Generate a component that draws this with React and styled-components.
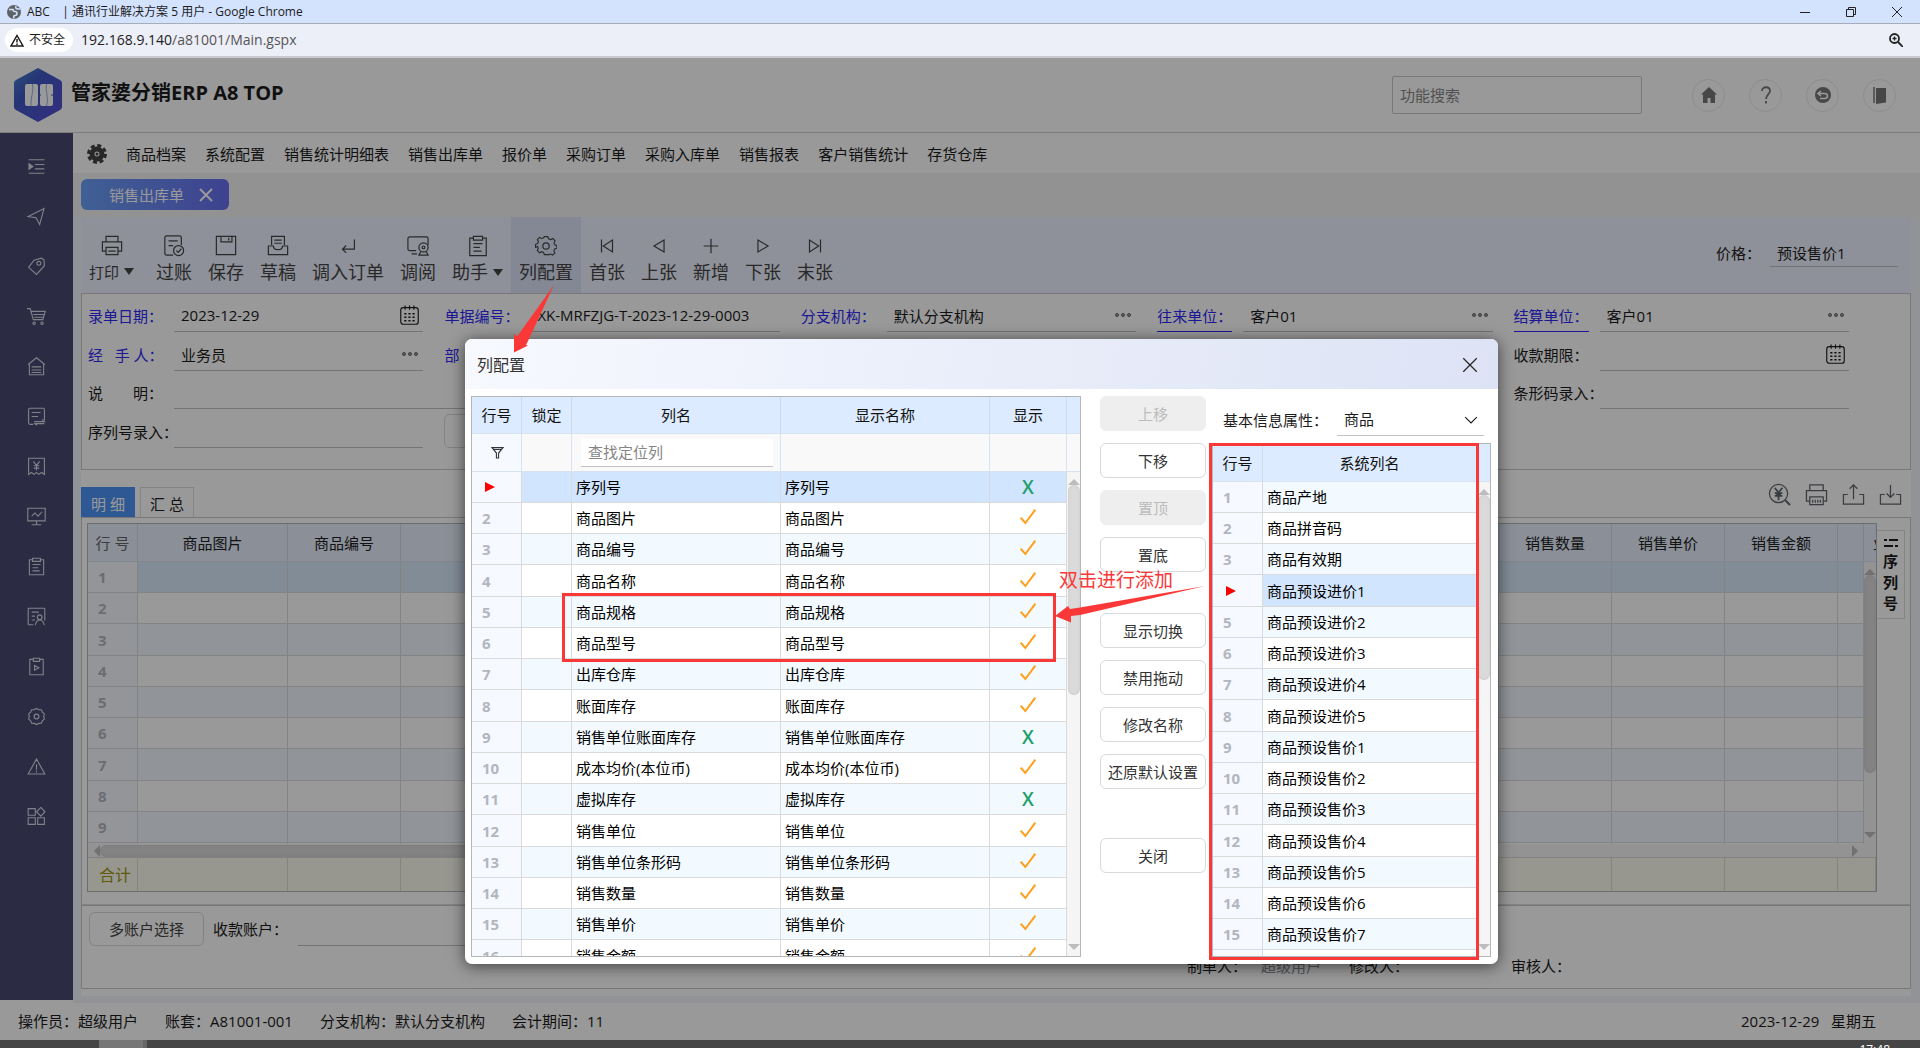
import React from "react";
import styled, { createGlobalStyle, css } from "styled-components";

const GlobalStyle = createGlobalStyle`
  *, *::before, *::after { box-sizing: border-box; }
  body {
    margin: 0;
    overflow: hidden;
    font: 15px/20px "Open Sans", "Noto Sans CJK SC", sans-serif;
    color: #1c1c1c;
    background: #fff;
  }
  button, input, select { font: inherit; color: inherit; }
  button { cursor: pointer; }
`;

/* ---------- icons ---------- */

const Svg = styled.svg`
  display: block;
  flex: none;
  width: ${(p) => p.$w}px;
  height: ${(p) => p.$h || p.$w}px;
  fill: none;
  stroke: currentColor;
  stroke-width: ${(p) => p.$stroke || 1.3};
`;

const shapes = {
  printer: <path d="M5.5 7.5V1.5h13v6M5.5 17.5h-4v-10h21v10h-4M5.5 13.5h13v8h-13zM8 17.5h8" />,
  post: <><path d="M11 22H4a2 2 0 0 1-2-2V3a2 2 0 0 1 2-2h14a2 2 0 0 1 2 2v8M6 6.500h10M6 11.500h5" /><circle cx="17" cy="17" r="5.500" /><path d="M14.500 17l2 2 3.500-4" /></>,
  save: <path d="M1.500 1.500h21v20h-21zM6.500 1.500v6h12v-6M15 3v3" />,
  draft: <path d="M5 11V1.500h14V11M1.500 21.500V12H7c0 2.500 2 4 5 4s5-1.500 5-4h5.500v9.500zM8 5.500h8M8 9h8" />,
  enter: <path d="M19 5v10.500H6M10 11.500l-4 4 4 4" />,
  review: <><path d="M10 17H3a2 2 0 0 1-2-2V4a2 2 0 0 1 2-2h18a2 2 0 0 1 2 2v7M5 20.500h6" /><circle cx="18" cy="13.500" r="5" /><circle cx="18" cy="13.500" r="1.500" /><path d="M15 18l-2 4h3M21 18l2 4h-3M15 22h6" /></>,
  clip: <path d="M7 3.500H3v19h18v-19h-4M7 1.500h10v4H7zM7 9.500h10M7 13.500h7M7 17.500h9" />,
  gear: <><path d="M10 1.500h4l.800 2.500 2.600 1 2.500-1.200 2.500 2.700-1.200 2.400.900 2.100 2.400 1v3l-2.500.900-.900 2.200 1.100 2.400-2.600 2.500-2.400-1.200-2.300.900L14 22.500h-4l-.900-2.500-2.300-1-2.500 1.300-2.500-2.700 1.200-2.400-.9-2.200L-.3 14v-3.500l2.500-1 .9-2.100L1.900 5l2.500-2.500 2.400 1.200L9.200 3z" transform="translate(.8 .3) scale(.94)" /><circle cx="12" cy="12" r="3.500" /></>,
  first: <path d="M6 5v14M18 5.500v13L8 12z" />,
  prev: <path d="M17.500 5.500v13L6.500 12z" />,
  plus: <path d="M12 4v16M4 12h16" />,
  next: <path d="M6.500 5.500v13l11-6.500z" />,
  last: <path d="M18 5v14M6 5.500v13L16 12z" />,
  calendar: <><rect x="2" y="3" width="20" height="19" rx="3" /><path d="M7 .500v5M12 .500v5M17 .500v5" /><path d="M6 10h12M6 14h12M6 18h12" strokeDasharray="2.500 2.200" strokeWidth="1.800" /></>,
  indent: <><path d="M2 3.500h20M10 9.500h12M10 15h12M2 20.500h20" /><path d="M2.500 8.500l5 3.500-5 3.500z" fill="currentColor" /></>,
  plane: <path d="M1.500 12L21.500 2 16 22l-4.500-8.500z" />,
  tag: <><path d="M2 13L9 4l9-2.500 3.500 2L22 11 12 22z" /><circle cx="15" cy="8" r="2.500" /></>,
  cart: <><path d="M0 2h4l4 14h12l3-10.500H5M8 9.500h13.500M9 13h11.500" /><circle cx="9" cy="20.500" r="1.500" /><circle cx="19" cy="20.500" r="1.500" /></>,
  store: <path d="M1.500 9.500L12 1l10.500 8.500M3 8.500v14h18v-14M6 12.500h12M6 16.500h12M6 19.500h12" />,
  returns: <path d="M8 22H4a2 2 0 0 1-2-2V3a1.500 1.500 0 0 1 1.500-1.500h17A1.500 1.500 0 0 1 22 3v14M6 7h11M6 12h8M9 18.500h13l-3-3M22 21h-12l2.500 2" />,
  bill: <path d="M2 22V1.500h20V22l-3.500-2.500L15 22l-3-2.500L9 22l-3.500-2.500zM8 5.500l4 5 4-5M12 10.500V17M8.500 11h7M8.500 14h7" />,
  chart: <path d="M1 1.500h22v16H1zM12 17.500v5M6 22.500h12M6 11.500l4-4 4 4 5-5.500" />,
  person: <><path d="M8 22.500H2.500a1 1 0 0 1-1-1v-19a1 1 0 0 1 1-1h19a1 1 0 0 1 1 1V17M6 6.500h9M6 11.500h4M6 16.500h4" /><circle cx="16" cy="13" r="3" /><path d="M10.500 23c1-5 3-6.500 5.500-6.500s5 2 6 6.500" /></>,
  clipPlay: <path d="M8 3H3.500v19.500h17V3H16M8 1.500h8v4H8zM9.500 10.500v6l5.500-3z" />,
  flower: <><path d="M12 1.800l2.800 1.500 3.300.200 1.300 2.900 2.500 2.300-.800 3.300.800 3.300-2.500 2.300-1.300 2.900-3.300.200L12 22.200l-2.800-1.500-3.300-.200-1.300-2.900-2.500-2.300.8-3.300-.8-3.300 2.500-2.300 1.300-2.900 3.300-.2z" /><circle cx="12" cy="12" r="3" /></>,
  warn: <path d="M12 2.500l10.500 19h-21zM12 9v7M12 17.500v2" />,
  apps: <path d="M1.500 2h9v8.500h-9zM1.500 13.500h9V22h-9zM13.500 13.500H22V22h-8.500zM17.500.500l5.300 5.500-5.300 5.500L12 6z" />,
  yenSearch: <><circle cx="11" cy="11" r="9.500" /><path d="M18 18l5 5" strokeWidth="2" /><path d="M7 5l4 5 4-5M11 10v8M7 10.500h8M7 13.500h8M8.500 12h5" strokeWidth="1.800" /></>,
  printer2: <path d="M5 8V2h14v6M5 19H1.500V8h21v11H19M5 14.500h14v8H5zM8 17.500v3M10.700 17.500v3M13.400 17.500v3M16 17.500v3" />,
  upload: <path d="M6 12H1.500v10h21V12H18M12 17V2M8 6l4-4 4 4" />,
  download: <path d="M6 12H1.500v10h21V12H18M12 2v13M8 11l4 4 4-4" />,
  funnel: <path d="M2 3h20l-8 10v9h-4v-9zM5 6.500h14" />,
  close: <path d="M3 3l18 18M21 3L3 21" />,
  chevron: <path d="M2 7l10 10L22 7" />,
  check: <path d="M1 13l7 8L23 1" />,
};

const Icon = ({ name, size = 22, stroke }) => (
  <Svg viewBox="0 0 24 24" $w={size} $stroke={stroke} aria-hidden="true">{shapes[name]}</Svg>
);

const MarkerSvg = styled(Svg)`
  margin-left: 3px;
`;
const Marker = () => (
  <MarkerSvg viewBox="0 0 10 10" $w={10} aria-hidden="true">
    <path d="M0 0l10 5-10 5z" fill="#f00" stroke="none" />
  </MarkerSvg>
);

/* ---------- browser frame ---------- */

const Shell = styled.div`
  display: flex;
  flex-direction: column;
  height: 100vh;
`;
const TitleBar = styled.div`
  display: flex;
  align-items: center;
  flex: none;
  height: 24px;
  padding: 0 11px 0 7px;
  gap: 6px;
  background: #d3e2fd;
  border-bottom: 1px solid #a8acb6;
  font-size: 12px;
  white-space: pre;
`;
const WindowButtons = styled.div`
  display: flex;
  gap: 22px;
  margin-left: auto;
`;
const FrameButton = styled.button`
  display: grid;
  place-items: center;
  width: 24px;
  height: 22px;
  padding: 0;
  border: 0;
  background: none;
  color: #222;
`;
const AddressBar = styled.div`
  display: flex;
  align-items: center;
  flex: none;
  height: 34px;
  padding: 0 12px 0 5px;
  gap: 8px;
  background: #eceef8;
  border-bottom: 2px solid #c9cad0;
`;
const Pill = styled.span`
  display: flex;
  align-items: center;
  gap: 5px;
  height: 24px;
  padding: 0 8px 0 5px;
  border-radius: 12px;
  background: #fff;
  font-size: 12px;
`;
const Url = styled.span`
  flex: 1;
  font-size: 14px;
  color: #555;
  b { font-weight: 400; color: #222; }
`;
const Taskbar = styled.footer`
  display: flex;
  justify-content: space-between;
  flex: none;
  height: 8px;
  padding: 0 30px 0 99px;
  overflow: hidden;
  background: #454545;
  color: #fff;
  font-size: 12px;
  line-height: 20px;
`;
const TaskItem = styled.span`
  width: 48px;
  background: #777;
  border-right: 4px solid #666;
`;

/* ---------- application ---------- */

const AppArea = styled.div`
  position: relative;
  display: flex;
  flex-direction: column;
  flex: 1;
  min-height: 0;
  background: #fff;
`;
const Header = styled.header`
  display: flex;
  align-items: center;
  flex: none;
  height: 75px;
  padding: 0 24px 0 14px;
  border-bottom: 1px solid #cfcfcf;
`;
const Brand = styled.h1`
  margin: 0 auto 0 9px;
  font-size: 20px;
  line-height: 24px;
  font-weight: 700;
  padding-bottom: 4px;
`;
const SearchBox = styled.input`
  width: 250px;
  height: 38px;
  padding: 0 7px;
  border: 1px solid #c6c6c6;
  border-radius: 2px;
  background: #fff;
  &::placeholder { color: #888; opacity: 1; }
`;
const RoundButton = styled.button`
  display: grid;
  place-items: center;
  width: 33px;
  height: 33px;
  padding: 0;
  border: 1px solid #eaeaea;
  border-radius: 50%;
  background: #fff;
  color: #777;
`;
const HeaderTools = styled.div`
  display: flex;
  gap: 24px;
  margin-left: 50px;
`;
const Columns = styled.div`
  display: flex;
  flex: 1;
  min-height: 0;
`;
const Sidebar = styled.nav`
  display: flex;
  flex-direction: column;
  align-items: center;
  gap: 10px;
  width: 73px;
  margin-bottom: 3px;
  padding: 13px 0 0;
  background: #494a70;
  color: #d6d8e4;
`;
const SideButton = styled.button`
  display: grid;
  place-items: center;
  width: 40px;
  height: 40px;
  padding: 0;
  border: 0;
  background: none;
`;
const Main = styled.main`
  display: flex;
  flex-direction: column;
  flex: 1;
  min-width: 0;
  background: #f3f5fb;
`;
const MenuBar = styled.nav`
  display: flex;
  align-items: center;
  gap: 19px;
  flex: none;
  height: 40px;
  padding: 2px 0 0 14px;
  background: #fff;
`;
const MenuLink = styled.a`
  color: #1c1c1c;
  text-decoration: none;
`;
const PageTabs = styled.div`
  flex: none;
  height: 44px;
  padding: 6px 8px;
  background: #f3f3f3;
`;
const PageTab = styled.div`
  display: flex;
  align-items: center;
  gap: 14px;
  width: 148px;
  height: 31px;
  padding-left: 28px;
  border-radius: 6px;
  background: linear-gradient(90deg, #6ba0f8, #686ff0);
  color: #fff;
`;
const TabClose = styled.button`
  padding: 0;
  border: 0;
  background: none;
`;
const Workspace = styled.div`
  display: flex;
  flex-direction: column;
  flex: 1;
  min-height: 0;
  margin: 0 9px 7px 8px;
  padding-bottom: 7px;
  background: #fff;
`;
const Toolbar = styled.div`
  display: flex;
  flex: none;
  height: 76px;
  background: #edf2ff;
  color: #454545;
`;
const ToolButton = styled.button`
  display: flex;
  flex-direction: column;
  align-items: center;
  gap: 4px;
  margin-right: ${(p) => (p.$small ? 6 : 0)}px;
  padding: 18px 8px 0;
  border: 0;
  background: ${(p) => (p.$active ? "#dce2f7" : "none")};
  font-size: ${(p) => (p.$small ? 15 : 18)}px;
  line-height: 22px;
  white-space: nowrap;
`;
const Caret = styled.span`
  display: inline-block;
  margin-left: 5px;
  border: 5px solid transparent;
  border-top: 7px solid currentColor;
  border-bottom: 0;
  vertical-align: 3px;
`;
const PriceField = styled.div`
  display: flex;
  align-items: center;
  gap: 9px;
  margin: 22px 13px 0 auto;
  height: 28px;
  color: #222;
`;
const lineControl = css`
  border: 0;
  border-bottom: 1px solid #c2c2c2;
  border-radius: 0;
  background: transparent;
  padding: 0 7px;
  min-width: 0;
  outline: 0;
`;
const PriceInput = styled.input`
  ${lineControl}
  width: 128px;
  height: 28px;
`;
const FormPanel = styled.form`
  display: grid;
  grid-template-columns: repeat(5, 1fr);
  grid-template-rows: 38px 39px 38px 39px;
  flex: none;
  padding: 0 40px 21px 6px;
  border: 1px solid #c8c8c8;
`;
const FieldCell = styled.div`
  display: flex;
  align-items: flex-end;
  grid-column: ${(p) => p.$col} / span ${(p) => p.$span || 1};
  grid-row: ${(p) => p.$row};
  padding-right: 21px;
  min-width: 0;
`;
const FieldLabel = styled.label`
  width: 86px;
  flex: none;
  height: 30px;
  line-height: 28px;
  white-space: pre;
  color: ${(p) => (p.$blue ? "#2f28f5" : "#1c1c1c")};
  span { display: inline-block; height: 30px; border-bottom: ${(p) => (p.$under ? "1px solid #2f28f5" : "0")}; }
`;
const LineBox = styled.div`
  display: flex;
  align-items: center;
  flex: 1;
  min-width: 0;
  height: 30px;
  padding: 0 3px 3px 0;
  border-bottom: 1px solid #c2c2c2;
`;
const LineInput = styled.input`
  ${lineControl}
  flex: 1;
  border: 0;
  height: 26px;
`;
const Dots = styled.button`
  display: flex;
  gap: 2px;
  padding: 0 2px;
  border: 0;
  background: none;
  i { width: 4px; height: 4px; border-radius: 50%; border: 1px solid #666; background: #aaa; }
`;
const OutlineButton = styled.button`
  height: 34px;
  padding: 0 19px;
  border: 1px solid #d9d9d9;
  border-radius: 6px;
  background: #fff;
  color: #444;
`;
const DetailBar = styled.div`
  display: flex;
  align-items: flex-end;
  flex: none;
  height: 47px;
  padding-right: 9px;
`;
const DetailTab = styled.button`
  width: 54px;
  height: 30px;
  margin-right: 5px;
  padding: 2px 0 0;
  border: 1px solid ${(p) => (p.$active ? "#4b93f5" : "#dcdcdc")};
  border-bottom: 0;
  background: ${(p) => (p.$active ? "#4b93f5" : "#fff")};
  color: ${(p) => (p.$active ? "#fff" : "#222")};
`;
const DetailTools = styled.div`
  display: flex;
  gap: 14px;
  margin: 0 0 11px auto;
  color: #60656c;
`;
const ToolIcon = styled.button`
  padding: 0;
  border: 0;
  background: none;
`;
const GridPanel = styled.section`
  display: flex;
  flex: 1;
  min-height: 0;
  padding: 5px 5px 12px;
  border: 1px solid #c8c8c8;
  border-bottom-color: #dcdcdc;
`;
const SideTab = styled.button`
  display: flex;
  flex-direction: column;
  align-items: center;
  gap: 1px;
  width: 28px;
  height: 89px;
  margin-top: 7px;
  padding: 7px 0 0;
  border: 1px solid #dcdcdc;
  border-left: 0;
  background: #fff;
  font-weight: 700;
  svg { margin-bottom: 2px; }
`;

/* ---------- data grids ---------- */

const GridFrame = styled.div`
  display: flex;
  flex-direction: column;
  flex: 1;
  min-width: 0;
  min-height: 0;
  border: 1px solid #b4b6b9;
  background: #fff;
`;
const GridBody = styled.div`
  display: flex;
  flex: 1;
  min-height: 0;
`;
const Clip = styled.div`
  flex: 1;
  min-width: 0;
  overflow: hidden;
`;
const Table = styled.table`
  width: 100%;
  table-layout: fixed;
  border-collapse: separate;
  border-spacing: 0;
`;
const Th = styled.th`
  height: ${(p) => p.$h || 37}px;
  padding: 0;
  border-right: 1px solid #cfdae8;
  border-bottom: 1px solid #d6e2ef;
  background: ${(p) => p.$bg || "#dcebff"};
  color: ${(p) => p.$color || "#111"};
  font-weight: 400;
`;
const Row = styled.tr`
  height: 31px;
  &:nth-child(4n + ${(p) => p.$phase || 0}) { height: 32px; }
  background: ${(p) => (p.$selected ? p.$tint || "#d2e5ff" : p.$alt ? "#f2f9ff" : "#fff")};
`;
const Td = styled.td`
  padding: 0 4px;
  border-right: 1px solid #dadada;
  border-bottom: 1px solid #dadada;
  color: #000;
  overflow: hidden;
  white-space: nowrap;
  text-align: ${(p) => (p.$center ? "center" : "left")};
`;
const NumCell = styled(Td)`
  padding-left: 10px;
  background: #f6f9ff;
  color: #b2b6bd;
  font-weight: 700;
`;
const FilterCell = styled.td`
  height: 38px;
  padding: 0 7px 0 9px;
  border-right: 1px solid #d6e2ef;
  border-bottom: 1px solid #d6e2ef;
  background: ${(p) => (p.$lead ? "#f6f9ff" : "#f9f9f9")};
`;
const FilterInput = styled.input`
  ${lineControl}
  display: block;
  width: 100%;
  height: 28px;
  background: #fff;
  &::placeholder { color: #858585; opacity: 1; }
`;
const Mark = styled.span`
  display: flex;
  justify-content: center;
  padding-bottom: ${(p) => (p.$dark ? 0 : 2)}px;
  color: ${(p) => (p.$dark ? "#333" : "#ff9f1a")};
`;
const Cross = styled.span`
  color: #22a06b;
  font-size: 19px;
  font-weight: 600;
`;
const ScrollColumn = styled.div`
  display: flex;
  flex-direction: column;
  flex: none;
  width: ${(p) => p.$w}px;
`;
const Spacer = styled.div`
  flex: none;
  height: ${(p) => p.$h}px;
  padding-left: 9px;
  line-height: ${(p) => p.$h}px;
  overflow: hidden;
  border-bottom: 1px solid #d6e2ef;
  background: ${(p) => p.$bg};
`;
const Track = styled.div`
  display: flex;
  flex-direction: ${(p) => (p.$row ? "row" : "column")};
  align-items: center;
  flex: ${(p) => (p.$row ? "none" : "1")};
  padding: ${(p) => (p.$row ? "0 18px 0 6px" : "7px 0 6px")};
  ${(p) => p.$row && "height: 13px;"}
  background: #f5f5f5;
`;
const Thumb = styled.div`
  flex: none;
  ${(p) => (p.$row ? `width: ${p.$size}; height: 12px;` : `width: 12px; height: ${p.$size}px;`)}
  border-radius: 6px;
  background: #dadada;
  box-shadow: inset 0 0 3px #c8c8c8;
`;
const Tip = styled.i`
  flex: none;
  border: 6px solid transparent;
  ${(p) => p.$dir === "up" && "border-top: 0; border-bottom-color: #bdbdbd;"}
  ${(p) => p.$dir === "down" && "border-bottom: 0; border-top-color: #bdbdbd; margin-top: auto;"}
  ${(p) => p.$dir === "left" && "border-left: 0; border-right-color: #bdbdbd;"}
  ${(p) => p.$dir === "right" && "border-right: 0; border-left-color: #bdbdbd; margin-left: auto;"}
`;
const TotalCell = styled.td`
  height: 34px;
  padding: 0 0 0 11px;
  border-right: 1px solid #e0dccb;
  border-top: 1px solid #d8d8d8;
  background: #fcfcf0;
  color: #9d9715;
  font-size: 16px;
`;

const VScroll = ({ thumb }) => (
  <Track>
    <Tip $dir="up" />
    <Thumb $size={thumb} />
    <Tip $dir="down" />
  </Track>
);
const ColGroup = ({ widths }) => (
  <colgroup>{widths.map((w, i) => <col key={i} width={w || undefined} />)}</colgroup>
);

/* ---------- footer ---------- */

const AccountPanel = styled.section`
  flex: none;
  height: 84px;
  padding: 6px 40px 0 7px;
  border: 1px solid #c8c8c8;
`;
const AccountRow = styled.div`
  display: flex;
  align-items: center;
  label { margin: 0 10px 0 9px; }
`;
const AccountInput = styled.input`
  ${lineControl}
  width: 249px;
  height: 33px;
`;
const Signatures = styled.div`
  display: flex;
  margin: 10px 0 0 1098px;
  white-space: nowrap;
  span { flex: none; width: 162px; }
  em { margin-left: 14px; font-style: normal; color: #8a8f96; }
`;
const StatusBar = styled.footer`
  display: flex;
  align-items: center;
  gap: 27px;
  flex: none;
  height: 37px;
  padding: 0 44px 2px 18px;
  background: #fff;
`;
const StatusRight = styled.span`
  margin-left: auto;
  white-space: pre;
`;

/* ---------- dialog ---------- */

const Shade = styled.div`
  position: absolute;
  inset: 0;
  background: rgba(0, 0, 0, 0.4);
`;
const Dialog = styled.section`
  position: absolute;
  left: 465px;
  top: 281px;
  display: flex;
  flex-direction: column;
  width: 1033px;
  height: 625px;
  border-radius: 7px;
  background: #fff;
  box-shadow: 0 2px 16px rgba(0, 0, 0, 0.6);
`;
const DialogHead = styled.header`
  display: flex;
  align-items: center;
  justify-content: space-between;
  flex: none;
  height: 50px;
  padding: 2px 16px 0 12px;
  border-radius: 7px 7px 0 0;
  background: linear-gradient(100deg, #f7f9ff, #dde3f5);
  h2 { margin: 0; font-size: 16px; font-weight: 400; color: #333; }
`;
const DialogBody = styled.div`
  display: flex;
  flex: 1;
  min-height: 0;
  padding: 7px 7px 7px 6px;
`;
const LeftPane = styled.div`
  display: flex;
  width: 610px;
`;
const Actions = styled.div`
  display: flex;
  flex-direction: column;
  gap: 41px;
  width: 106px;
  margin: 0 6px 0 19px;
`;
const ActionGroup = styled.div`
  display: flex;
  flex-direction: column;
  gap: 12px;
  &:last-child { padding-top: 8px; }
`;
const ActionButton = styled.button`
  height: 35px;
  padding: 0;
  border: 1px solid #d9d9d9;
  border-radius: 6px;
  background: #fff;
  color: #333;
  &:disabled { border-color: #eee; background: #eee; color: #bbb; }
`;
const RightPane = styled.div`
  display: flex;
  flex-direction: column;
  flex: 1;
  min-width: 0;
`;
const PropertyRow = styled.div`
  display: flex;
  align-items: center;
  justify-content: space-between;
  flex: none;
  height: 47px;
  padding: 0 7px 0 11px;
  white-space: nowrap;
`;
const SelectWrap = styled.div`
  display: grid;
  align-items: center;
  width: 147px;
  > * { grid-area: 1 / 1; }
  svg { justify-self: end; margin-right: 6px; pointer-events: none; }
`;
const Select = styled.select`
  ${lineControl}
  appearance: none;
  height: 32px;
`;
const Highlight = styled.div`
  position: absolute;
  left: ${(p) => p.$x}px;
  top: ${(p) => p.$y}px;
  width: ${(p) => p.$w}px;
  height: ${(p) => p.$h}px;
  border: 3px solid #fb3838;
  pointer-events: none;
`;
const Arrows = styled.svg`
  position: absolute;
  left: 0;
  top: -60px;
  width: 800px;
  height: 360px;
  fill: #fb3838;
  pointer-events: none;
`;
const Note = styled.p`
  position: absolute;
  left: 594px;
  top: 229px;
  margin: 0;
  font-size: 19px;
  line-height: 24px;
  color: #fb3838;
`;

/* ---------- data ---------- */

const sideIcons = [["indent", "收起"], ["plane", "导航"], ["tag", "商品"], ["cart", "采购"], ["store", "仓库"], ["returns", "单据"], ["bill", "账款"], ["chart", "报表"], ["clip", "订单"], ["person", "客户"], ["clipPlay", "任务"], ["flower", "设置"], ["warn", "预警"], ["apps", "应用"]];
const menus = ["商品档案", "系统配置", "销售统计明细表", "销售出库单", "报价单", "采购订单", "采购入库单", "销售报表", "客户销售统计", "存货仓库"];
const tools = [
  { icon: "printer", text: "打印", caret: true, small: true },
  { icon: "post", text: "过账" }, { icon: "save", text: "保存" }, { icon: "draft", text: "草稿" },
  { icon: "enter", text: "调入订单" }, { icon: "review", text: "调阅" }, { icon: "clip", text: "助手", caret: true },
  { icon: "gear", text: "列配置", active: true }, { icon: "first", text: "首张" }, { icon: "prev", text: "上张" },
  { icon: "plus", text: "新增" }, { icon: "next", text: "下张" }, { icon: "last", text: "末张" },
];
const fields = [
  { id: "date", label: "录单日期：", value: "2023-12-29", col: 1, row: 1, blue: true, end: "calendar" },
  { id: "no", label: "单据编号：", value: "XK-MRFZJG-T-2023-12-29-0003", col: 2, row: 1, blue: true },
  { id: "branch", label: "分支机构：", value: "默认分支机构", col: 3, row: 1, blue: true, end: "dots" },
  { id: "unit", label: "往来单位：", value: "客户01", col: 4, row: 1, blue: true, under: true, end: "dots" },
  { id: "settle", label: "结算单位：", value: "客户01", col: 5, row: 1, blue: true, under: true, end: "dots" },
  { id: "handler", label: "经   手 人：", value: "业务员", col: 1, row: 2, blue: true, end: "dots" },
  { id: "dept", label: "部　　门：", value: "", col: 2, row: 2, blue: true },
  { id: "due", label: "收款期限：", value: "", col: 5, row: 2, end: "calendar" },
  { id: "memo", label: "说　　明：", value: "", col: 1, row: 3, span: 4 },
  { id: "barcode", label: "条形码录入：", value: "", col: 5, row: 3 },
  { id: "serial", label: "序列号录入：", value: "", col: 1, row: 4 },
];
const mainCols = [50, 150, 113, 188, 0, 113, 113, 113, 26];
const mainHeads = ["行 号", "商品图片", "商品编号", "商品名称", "", "销售数量", "销售单价", "销售金额", ""];
const configRows = [["序列号", false], ["商品图片", true], ["商品编号", true], ["商品名称", true], ["商品规格", true], ["商品型号", true], ["出库仓库", true], ["账面库存", true], ["销售单位账面库存", false], ["成本均价(本位币)", true], ["虚拟库存", false], ["销售单位", true], ["销售单位条形码", true], ["销售数量", true], ["销售单价", true], ["销售金额", true]];
const systemRows = ["商品产地", "商品拼音码", "商品有效期", "商品预设进价1", "商品预设进价2", "商品预设进价3", "商品预设进价4", "商品预设进价5", "商品预设售价1", "商品预设售价2", "商品预设售价3", "商品预设售价4", "商品预设售价5", "商品预设售价6", "商品预设售价7", ""];

const DotsButton = () => <Dots type="button" aria-label="选择"><i /><i /><i /></Dots>;

const Field = ({ f }) => (
  <FieldCell $col={f.col} $row={f.row} $span={f.span}>
    <FieldLabel htmlFor={f.id} $blue={f.blue} $under={f.under}><span>{f.label}</span></FieldLabel>
    <LineBox>
      <LineInput id={f.id} defaultValue={f.value} />
      {f.end === "dots" && <DotsButton />}
      {f.end === "calendar" && <Icon name="calendar" size={21} />}
    </LineBox>
  </FieldCell>
);

const Logo = () => (
  <Svg viewBox="0 0 48 54" $w={48} $h={54} aria-hidden="true">
    <defs>
      <linearGradient id="hex" x1="0" y1="0" x2="1" y2="1">
        <stop offset="0" stopColor="#4a86c8" /><stop offset=".35" stopColor="#3f58c4" /><stop offset="1" stopColor="#5a4fd6" />
      </linearGradient>
    </defs>
    <path d="M24 0l22 12q2 1 2 3v24q0 2-2 3L24 54 2 42q-2-1-2-3V15q0-2 2-3z" fill="url(#hex)" stroke="none" />
    <path d="M13 16h9q2 0 2 2v18q0 2-2 2h-9q-2 0-2-2V18q0-2 2-2zM28 16h9q2 0 2 2v18q0 2-2 2h-9q-2 0-2-2V18q0-2 2-2z" fill="#fff" stroke="none" />
    <path d="M18.500 16q1 5-.5 11t-1 11M32.500 16q-1 5 .5 11t-.5 11" stroke="#8494d8" strokeWidth=".8" />
    <path d="M25 27h2M37 27h2" stroke="#4a5fc8" strokeWidth="1" />
  </Svg>
);

const MainGrid = () => (
  <GridFrame>
    <GridBody>
      <Clip>
        <Table>
          <ColGroup widths={mainCols} />
          <thead>
            <tr>{mainHeads.map((h, i) => <Th key={i} $h={38} $bg="#e6effd" $color={i ? "#222" : "#666"}>{h}</Th>)}</tr>
          </thead>
          <tbody>
            {Array.from({ length: 10 }, (_, r) => (
              <Row key={r} $phase={3} $tint="#d9e9fc" $selected={r === 0} $alt={r % 2 === 0}>
                <NumCell>{r < 9 ? r + 1 : ""}</NumCell>
                {mainCols.slice(1).map((_, c) => <Td key={c} />)}
              </Row>
            ))}
          </tbody>
        </Table>
      </Clip>
      <ScrollColumn $w={12}>
        <Spacer $h={38} $bg="#e6effd">业</Spacer>
        <VScroll thumb={198} />
      </ScrollColumn>
    </GridBody>
    <Track $row>
      <Tip $dir="left" />
      <Thumb $row $size="68%" />
      <Tip $dir="right" />
    </Track>
    <Table>
      <ColGroup widths={[...mainCols.slice(0, -1), 38]} />
      <tbody><tr>{mainCols.map((_, i) => <TotalCell key={i}>{i ? "" : "合计"}</TotalCell>)}</tr></tbody>
    </Table>
  </GridFrame>
);

const ConfigGrid = () => (
  <GridFrame>
    <GridBody>
      <Clip>
        <Table>
          <ColGroup widths={[50, 50, 209, 209, 0]} />
          <thead>
            <tr>{["行号", "锁定", "列名", "显示名称", "显示"].map((h) => <Th key={h}>{h}</Th>)}</tr>
            <tr>
              <FilterCell $lead><Mark $dark><Icon name="funnel" size={13} stroke={2} /></Mark></FilterCell>
              <FilterCell />
              <FilterCell><FilterInput aria-label="查找定位列" placeholder="查找定位列" /></FilterCell>
              <FilterCell /><FilterCell />
            </tr>
          </thead>
          <tbody>
            {configRows.map(([name, on], i) => (
              <Row key={name} $selected={i === 0} $alt={i % 2 === 0}>
                <NumCell>{i === 0 ? <Marker /> : i + 1}</NumCell>
                <Td />
                <Td>{name}</Td>
                <Td>{name}</Td>
                <Td $center>{on ? <Mark><Icon name="check" size={16} stroke={3} /></Mark> : <Cross>X</Cross>}</Td>
              </Row>
            ))}
          </tbody>
        </Table>
      </Clip>
      <ScrollColumn $w={13}>
        <Spacer $h={37} $bg="#dcebff" />
        <Spacer $h={38} $bg="#f9f9f9" />
        <VScroll thumb={210} />
      </ScrollColumn>
    </GridBody>
  </GridFrame>
);

const SystemGrid = () => (
  <GridFrame>
    <GridBody>
      <Clip>
        <Table>
          <ColGroup widths={[50, 0]} />
          <thead><tr><Th $h={38}>行号</Th><Th $h={38}>系统列名</Th></tr></thead>
          <tbody>
            {systemRows.map((name, i) => (
              <Row key={i} $selected={i === 3} $alt={i % 2 === 0}>
                <NumCell>{i === 3 ? <Marker /> : name && i + 1}</NumCell>
                <Td>{name}</Td>
              </Row>
            ))}
          </tbody>
        </Table>
      </Clip>
      <ScrollColumn $w={13}>
        <Spacer $h={38} $bg="#dcebff" />
        <VScroll thumb={185} />
      </ScrollColumn>
    </GridBody>
  </GridFrame>
);

export default function App() {
  return (
    <Shell>
      <GlobalStyle />
      <TitleBar>
        <Svg viewBox="0 0 14 14" $w={14} aria-hidden="true">
          <circle cx="7" cy="7" r="7" fill="#5f6368" stroke="none" />
          <path d="M2 4.500l4 0q0 2 2 2t2 2-2 2-1 3M9 1q-1 3 2 3h2" stroke="#d3e2fd" strokeWidth="1.500" />
        </Svg>
        <span>{"ABC    | 通讯行业解决方案 5 用户 - Google Chrome"}</span>
        <WindowButtons>
          <FrameButton aria-label="最小化"><Svg viewBox="0 0 10 10" $w={10} $stroke={1}><path d="M0 5.500h10" /></Svg></FrameButton>
          <FrameButton aria-label="还原"><Svg viewBox="0 0 10 10" $w={10} $stroke={1}><path d="M.500 2.500h7v7h-7zM2.500 2.500v-2h7v7h-2" /></Svg></FrameButton>
          <FrameButton aria-label="关闭窗口"><Svg viewBox="0 0 10 10" $w={10} $stroke={1}><path d="M0 0l10 10M10 0L0 10" /></Svg></FrameButton>
        </WindowButtons>
      </TitleBar>
      <AddressBar>
        <Pill>
          <Svg viewBox="0 0 14 13" $w={14} $h={13} $stroke={1.5} aria-hidden="true"><path d="M7 1.500l6 10.500H1zM7 5v3.500M7 9.500v1.500" /></Svg>
          不安全
        </Pill>
        <Url><b>192.168.9.140</b>/a81001/Main.gspx</Url>
        <FrameButton aria-label="缩放">
          <Svg viewBox="0 0 14 14" $w={14} $stroke={1.8}><circle cx="5.500" cy="5.500" r="4.500" /><path d="M9 9l5 5" /><path d="M5.500 3.500v4M3.500 5.500h4" strokeWidth="1.300" /></Svg>
        </FrameButton>
      </AddressBar>

      <AppArea>
        <Header>
          <Logo />
          <Brand>管家婆分销ERP A8 TOP</Brand>
          <SearchBox aria-label="功能搜索" placeholder="功能搜索" />
          <HeaderTools>
            <RoundButton aria-label="主页"><Svg viewBox="0 0 16 16" $w={16}><path d="M8 0l8 7.500h-2V16h-4.500v-5h-3v5H2V7.500H0z" fill="currentColor" stroke="none" /></Svg></RoundButton>
            <RoundButton aria-label="帮助"><Svg viewBox="0 0 12 18" $w={12} $h={18} $stroke={1.8}><path d="M2 5c0-5 8-5 8 0 0 3-4 4-4 8M6 15v2.500" /></Svg></RoundButton>
            <RoundButton aria-label="返回"><Svg viewBox="0 0 16 16" $w={16}><circle cx="8" cy="8" r="8" fill="currentColor" stroke="none" /><path d="M6 4L3 6.500 6 9M3 6.500h6.500c4 0 4 5 0 5H5" stroke="#fff" strokeWidth="1.600" /></Svg></RoundButton>
            <RoundButton aria-label="退出"><Svg viewBox="0 0 13 17" $w={13} $h={17}><path d="M3 1h10v14.500L3 17z" fill="currentColor" stroke="none" /><path d="M1 0v16" strokeWidth="1.500" /></Svg></RoundButton>
          </HeaderTools>
        </Header>

        <Columns>
          <Sidebar>
            {sideIcons.map(([name, title]) => (
              <SideButton key={name} aria-label={title}><Icon name={name} size={19} stroke={1.4} /></SideButton>
            ))}
          </Sidebar>
          <Main>
            <MenuBar>
              <Svg viewBox="0 0 20 20" $w={20} aria-hidden="true">
                <circle cx="10" cy="10" r="5" stroke="#444" strokeWidth="5" />
                <circle cx="10" cy="10" r="8.500" stroke="#444" strokeWidth="3" strokeDasharray="4 2.670" />
                <circle cx="10" cy="10" r="1.500" fill="#444" stroke="none" />
              </Svg>
              {menus.map((m) => <MenuLink key={m} href="#">{m}</MenuLink>)}
            </MenuBar>
            <PageTabs>
              <PageTab>销售出库单<TabClose aria-label="关闭标签"><Icon name="close" size={16} stroke={3} /></TabClose></PageTab>
            </PageTabs>
            <Workspace>
              <Toolbar>
                {tools.map((t) => (
                  <ToolButton key={t.text} $active={t.active} $small={t.small}>
                    <Icon name={t.icon} />
                    <span>{t.text}{t.caret && <Caret />}</span>
                  </ToolButton>
                ))}
                <PriceField>
                  <label htmlFor="price">价格：</label>
                  <PriceInput id="price" defaultValue="预设售价1" />
                </PriceField>
              </Toolbar>
              <FormPanel>
                {fields.map((f) => <Field key={f.id} f={f} />)}
                <FieldCell $col={2} $row={4}><OutlineButton type="button">录入</OutlineButton></FieldCell>
              </FormPanel>
              <DetailBar>
                <DetailTab $active>明 细</DetailTab>
                <DetailTab>汇 总</DetailTab>
                <DetailTools>
                  <ToolIcon aria-label="查价"><Icon name="yenSearch" size={23} /></ToolIcon>
                  <ToolIcon aria-label="打印明细"><Icon name="printer2" size={23} /></ToolIcon>
                  <ToolIcon aria-label="导出"><Icon name="upload" size={23} /></ToolIcon>
                  <ToolIcon aria-label="导入"><Icon name="download" size={23} /></ToolIcon>
                </DetailTools>
              </DetailBar>
              <GridPanel>
                <MainGrid />
                <SideTab>
                  <Svg viewBox="0 0 14 10" $w={14} $h={10} $stroke={2} aria-hidden="true"><path d="M0 2h3M5 2h9M0 8h9M11 8h3" /></Svg>
                  <span>序</span><span>列</span><span>号</span>
                </SideTab>
              </GridPanel>
              <AccountPanel>
                <AccountRow>
                  <OutlineButton>多账户选择</OutlineButton>
                  <label htmlFor="account">收款账户：</label>
                  <AccountInput id="account" />
                </AccountRow>
                <Signatures>
                  <span>制单人：<em>超级用户</em></span>
                  <span>修改人：</span>
                  <span>审核人：</span>
                </Signatures>
              </AccountPanel>
            </Workspace>
          </Main>
        </Columns>

        <StatusBar>
          <span>操作员：超级用户</span>
          <span>账套：A81001-001</span>
          <span>分支机构：默认分支机构</span>
          <span>会计期间：11</span>
          <StatusRight>{"2023-12-29   星期五"}</StatusRight>
        </StatusBar>

        <Shade />
        <Dialog role="dialog" aria-label="列配置">
          <DialogHead>
            <h2>列配置</h2>
            <FrameButton aria-label="关闭对话框"><Icon name="close" size={18} stroke={1.6} /></FrameButton>
          </DialogHead>
          <DialogBody>
            <LeftPane><ConfigGrid /></LeftPane>
            <Actions>
              <ActionGroup>
                <ActionButton disabled>上移</ActionButton>
                <ActionButton>下移</ActionButton>
                <ActionButton disabled>置顶</ActionButton>
                <ActionButton>置底</ActionButton>
              </ActionGroup>
              <ActionGroup>
                <ActionButton>显示切换</ActionButton>
                <ActionButton>禁用拖动</ActionButton>
                <ActionButton>修改名称</ActionButton>
                <ActionButton>还原默认设置</ActionButton>
              </ActionGroup>
              <ActionGroup>
                <ActionButton>关闭</ActionButton>
              </ActionGroup>
            </Actions>
            <RightPane>
              <PropertyRow>
                <label htmlFor="property">基本信息属性：</label>
                <SelectWrap>
                  <Select id="property"><option>商品</option></Select>
                  <Icon name="chevron" size={14} stroke={2} />
                </SelectWrap>
              </PropertyRow>
              <SystemGrid />
            </RightPane>
          </DialogBody>
          <Highlight $x={97} $y={254} $w={494} $h={69} />
          <Highlight $x={744} $y={104} $w={270} $h={517} />
          <Arrows viewBox="0 0 800 360" aria-hidden="true">
            <path d="M89 6L63 62l-2 4 2 .500-14 7 0-1 0-18 2.500 3 2-2z" />
            <path d="M740 307L615 336l-9 1-0 6.500L590 337l13-10 2 3 10-1.500z" />
          </Arrows>
          <Note>双击进行添加</Note>
        </Dialog>
      </AppArea>

      <Taskbar>
        <TaskItem />
        <span>17:48</span>
      </Taskbar>
    </Shell>
  );
}
